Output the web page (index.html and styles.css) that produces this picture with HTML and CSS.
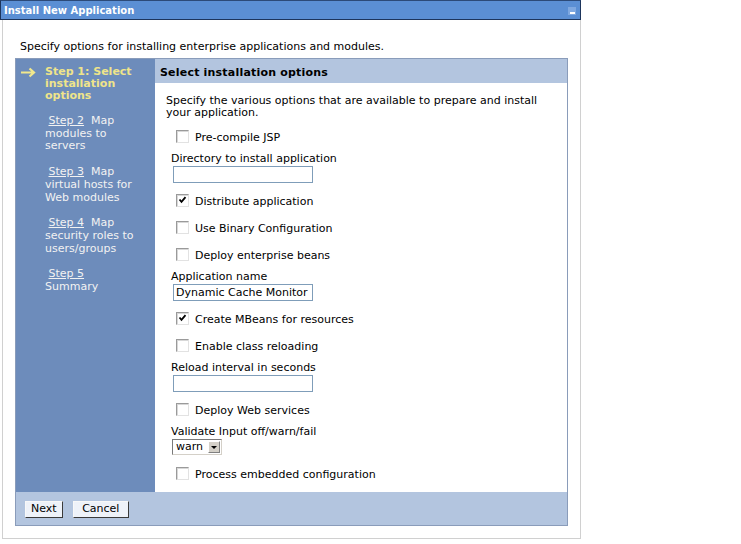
FILE: index.html
```html
<!DOCTYPE html>
<html lang="en">
<head>
    <meta charset="UTF-8">
    <title>Install New Application</title>
    <link rel="stylesheet" href="styles.css">
</head>
<body>

<div class="portlet">
    <div class="title-bar">
        <span class="title">Install New Application</span>
        <span class="minimize"><span class="dash"></span></span>
    </div>

    <div class="portlet-body">
        <p class="intro">Specify options for installing enterprise applications and modules.</p>

        <div class="wizard">
            <div class="wizard-main">
                <!-- Step navigation -->
                <div class="steps">
                    <div class="step current">
                        <span class="arrow"><svg width="16" height="11" viewBox="0 0 16 11"><path d="M1 5.5 H14 M9.5 1.5 L14 5.5 L9.5 9.5" fill="none" stroke="#f2e88c" stroke-width="2.2"/></svg></span>
                        <span class="step-text">Step 1: Select installation options</span>
                    </div>
                    <div class="step">
                        <span class="step-text">&nbsp;<a href="#">Step 2</a>&nbsp; Map modules to servers</span>
                    </div>
                    <div class="step">
                        <span class="step-text">&nbsp;<a href="#">Step 3</a>&nbsp; Map virtual hosts for Web modules</span>
                    </div>
                    <div class="step">
                        <span class="step-text">&nbsp;<a href="#">Step 4</a>&nbsp; Map security roles to users/groups</span>
                    </div>
                    <div class="step">
                        <span class="step-text">&nbsp;<a href="#">Step 5</a><br>Summary</span>
                    </div>
                </div>

                <div class="pane">
                    <div class="pane-header">Select installation options</div>
                    <div class="pane-body">
                        <p class="pane-desc">Specify the various options that are available to prepare and install your application.</p>

                        <div class="check-row"><span class="checkbox"></span>Pre-compile JSP</div>
                        <div class="field">
                            <div class="label">Directory to install application</div>
                            <div class="text-input"></div>
                        </div>
                        <div class="check-row"><span class="checkbox checked"><svg width="11" height="11" viewBox="0 0 11 11"><path d="M2.5 4.5 L4.5 6.8 L8.5 2.2" fill="none" stroke="#000" stroke-width="1.8"/></svg></span>Distribute application</div>
                        <div class="check-row"><span class="checkbox"></span>Use Binary Configuration</div>
                        <div class="check-row"><span class="checkbox"></span>Deploy enterprise beans</div>
                        <div class="field">
                            <div class="label">Application name</div>
                            <div class="text-input">Dynamic Cache Monitor</div>
                        </div>
                        <div class="check-row"><span class="checkbox checked"><svg width="11" height="11" viewBox="0 0 11 11"><path d="M2.5 4.5 L4.5 6.8 L8.5 2.2" fill="none" stroke="#000" stroke-width="1.8"/></svg></span>Create MBeans for resources</div>
                        <div class="check-row"><span class="checkbox"></span>Enable class reloading</div>
                        <div class="field">
                            <div class="label">Reload interval in seconds</div>
                            <div class="text-input"></div>
                        </div>
                        <div class="check-row"><span class="checkbox"></span>Deploy Web services</div>
                        <div class="field">
                            <div class="label">Validate Input off/warn/fail</div>
                            <div class="select-box">
                                <span class="select-value">warn</span>
                                <span class="select-btn"><span class="tri"></span></span>
                            </div>
                        </div>
                        <div class="check-row"><span class="checkbox"></span>Process embedded configuration</div>
                    </div>
                </div>
            </div>

            <div class="wizard-footer">
                <button class="button">Next</button>
                <button class="button">&nbsp;Cancel&nbsp;</button>
            </div>
        </div>
    </div>
</div>

</body>
</html>
```

FILE: styles.css
```css
body {
    margin: 0;
    padding: 0;
    background-color: #fff;
    font-family: "DejaVu Sans", Verdana, sans-serif;
    font-size: 11px;
    color: #000;
}

.portlet {
    width: 581px;
}

.title-bar {
    height: 18px;
    background-color: #5b8fd4;
    border: 1px solid #1d355c;
    border-top-color: #2c4a78;
    display: flex;
    align-items: center;
    justify-content: space-between;
    padding: 0 4px 0 3px;
    box-sizing: content-box;
}

.title {
    color: #fff;
    font-weight: bold;
    font-size: 10px;
}

.minimize {
    width: 8px;
    height: 8px;
    background-color: #7fa8e0;
    position: relative;
    margin-top: 2px;
}

.minimize .dash {
    position: absolute;
    left: 2px;
    bottom: 1px;
    width: 5px;
    height: 2px;
    background-color: #fff;
}

.portlet-body {
    margin-left: 2px;
    border: 1px solid #d0d0d0;
    border-top: none;
    padding: 0 13px 12px 12px;
}

.intro {
    margin: 0;
    padding: 20px 0 0 5px;
    height: 38px;
    line-height: 14px;
    box-sizing: border-box;
}

.wizard {
    border: 1px solid #8a9cba;
    width: 551px;
}

.wizard-main {
    display: flex;
}

.steps {
    flex: none;
    width: 138px;
    box-sizing: border-box;
    background-color: #6d8cbb;
    color: #f2f2f2;
    padding-top: 7px;
    padding-right: 8px;
    line-height: 12.7px;
}

.step {
    display: flex;
    margin-bottom: 13px;
    padding-left: 29px;
}

.step.current {
    padding-left: 4px;
    color: #efe48a;
    font-weight: bold;
    line-height: 12px;
}

.arrow {
    width: 25px;
    flex: none;
    padding-top: 1px;
}

.arrow svg {
    display: block;
}

.step a {
    color: #f2f2f2;
    text-decoration: underline;
}

.pane {
    flex: 1;
    min-width: 0;
    border-left: 1px solid #6d8cbb;
}

.pane-header {
    height: 24px;
    background-color: #b3c5df;
    font-weight: bold;
    font-size: 11px;
    letter-spacing: 0.2px;
    line-height: 27px;
    padding-left: 5px;
}

.pane-body {
    padding: 12px 12px 4px 11px;
}

.pane-desc {
    margin: 0 0 5px 0;
    line-height: 12px;
}

.check-row {
    height: 27px;
    display: flex;
    align-items: center;
    padding-left: 10px;
}

.checkbox {
    width: 11px;
    height: 11px;
    flex: none;
    border: 1px solid;
    border-color: #9a9a9a #e2e2e2 #e2e2e2 #9a9a9a;
    background-color: #fff;
    margin-right: 6px;
    margin-top: -3px;
    box-shadow: inset 1px 1px 0 #d8d8d8;
}

.checkbox svg {
    display: block;
}

.field {
    height: 37px;
    padding-left: 5px;
    padding-top: 2px;
    box-sizing: border-box;
}

.label {
    height: 12px;
    line-height: 12px;
    margin-bottom: 1px;
}

.text-input {
    width: 138px;
    height: 15px;
    border: 1px solid #7f9db9;
    margin-left: 2px;
    line-height: 15px;
    box-sizing: content-box;
}

.text-input:not(:empty) {
    width: 136px;
    padding-left: 2px;
}

.select-box {
    display: flex;
    width: 48px;
    height: 14px;
    border: 1px solid;
    border-color: #7a7a7a #d4d0c8 #d4d0c8 #7a7a7a;
    margin-left: 1px;
    background-color: #fff;
}

.select-value {
    flex: 1;
    padding-left: 3px;
    line-height: 14px;
}

.select-btn {
    width: 12px;
    height: 12px;
    margin: 1px;
    background-color: #d4d0c8;
    border: 1px solid;
    border-color: #fff #808080 #808080 #fff;
    box-sizing: border-box;
    display: flex;
    align-items: center;
    justify-content: center;
}

.tri {
    width: 0;
    height: 0;
    border-left: 3px solid transparent;
    border-right: 3px solid transparent;
    border-top: 3px solid #000;
}

.wizard-footer {
    height: 33px;
    background-color: #b3c5df;
    border-top: 1px solid #b3c5df;
    display: flex;
    align-items: center;
    padding-left: 9px;
    gap: 10px;
    box-sizing: border-box;
}

.button {
    height: 17px;
    padding: 0 5px;
    font-family: "DejaVu Sans", Verdana, sans-serif;
    font-size: 11px;
    background-color: #eef2f9;
    border: 1px solid;
    border-color: #f8f8f8 #3a3a3a #3a3a3a #f8f8f8;
    color: #000;
    line-height: 14px;
}
```
